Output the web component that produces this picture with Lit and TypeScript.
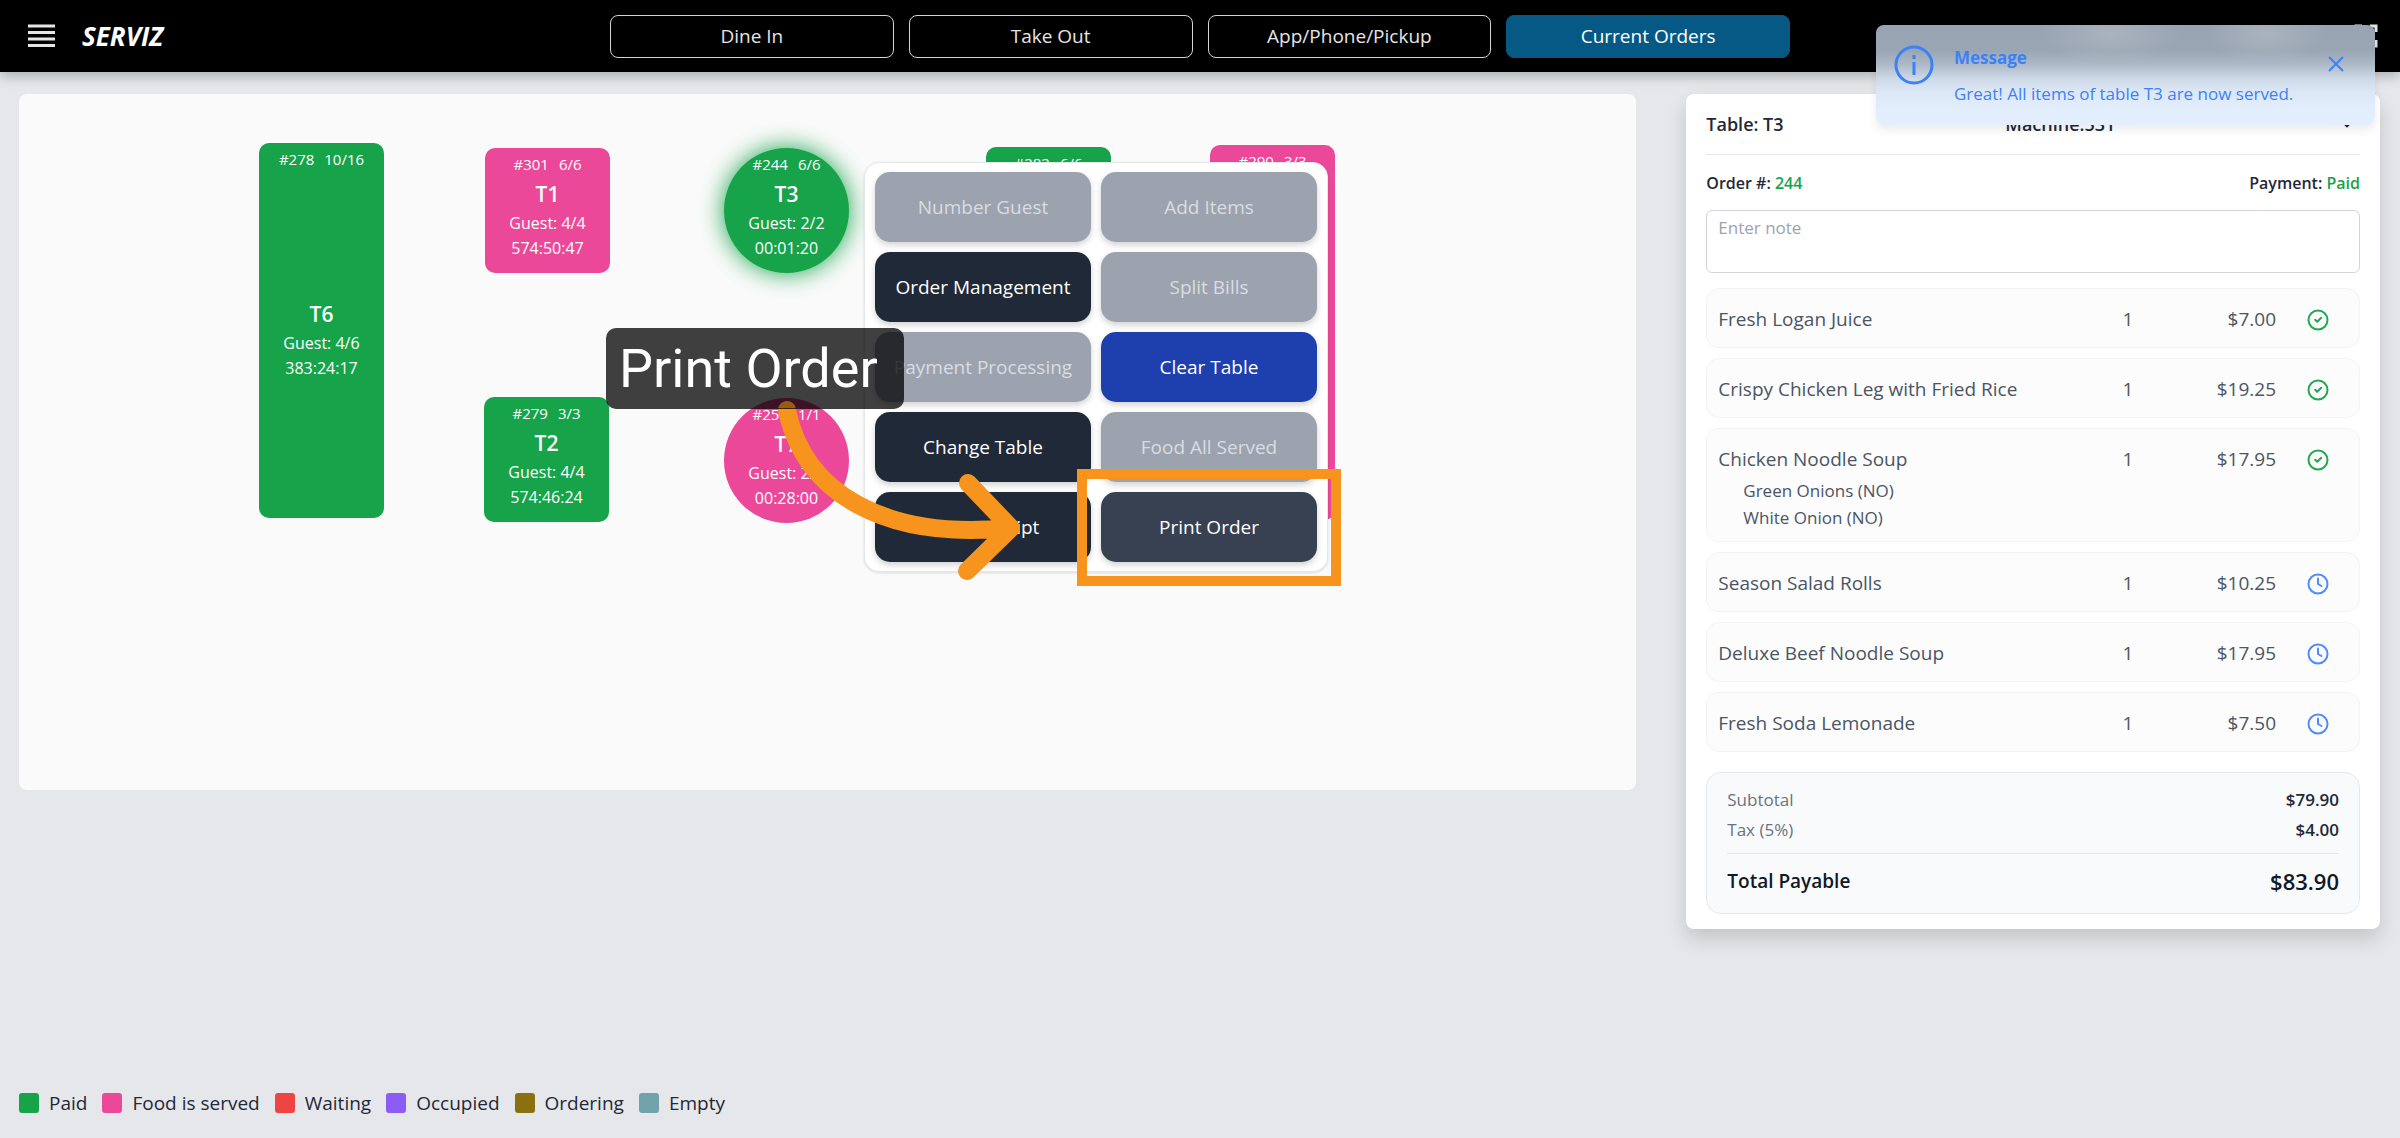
import { LitElement, html, css, svg, nothing } from "lit";
import { customElement } from "lit/decorators.js";
import { classMap } from "lit/directives/class-map.js";
import { styleMap } from "lit/directives/style-map.js";

type Status = "paid" | "served";
interface FloorTable { name: string; order: string; done: string; guests: string; time: string; status: Status; round?: boolean; active?: boolean; x: number; y: number; h: number; }
interface OrderItem { name: string; qty: number; price: string; served: boolean; notes?: string[]; }
interface Action { label: string; kind: "off" | "dark" | "blue" | "hover"; }

const NAV = ["Dine In", "Take Out", "App/Phone/Pickup", "Current Orders"];

const TABLES: FloorTable[] = [
  { name: "T6", order: "#278", done: "10/16", guests: "4/6", time: "383:24:17", status: "paid", x: 240, y: 49, h: 375 },
  { name: "T1", order: "#301", done: "6/6", guests: "4/4", time: "574:50:47", status: "served", x: 466, y: 54, h: 125 },
  { name: "T2", order: "#279", done: "3/3", guests: "4/4", time: "574:46:24", status: "paid", x: 465, y: 303, h: 125 },
  { name: "T3", order: "#244", done: "6/6", guests: "2/2", time: "00:01:20", status: "paid", round: true, active: true, x: 705, y: 54, h: 125 },
  { name: "T7", order: "#251", done: "1/1", guests: "2/2", time: "00:28:00", status: "served", round: true, x: 705, y: 304, h: 125 },
  { name: "T4", order: "#282", done: "6/6", guests: "4/4", time: "574:40:10", status: "paid", x: 967, y: 53, h: 125 },
  { name: "T5", order: "#290", done: "3/3", guests: "4/6", time: "383:20:05", status: "served", x: 1191, y: 51, h: 375 },
];

const ACTIONS: Action[] = [
  { label: "Number Guest", kind: "off" }, { label: "Add Items", kind: "off" },
  { label: "Order Management", kind: "dark" }, { label: "Split Bills", kind: "off" },
  { label: "Payment Processing", kind: "off" }, { label: "Clear Table", kind: "blue" },
  { label: "Change Table", kind: "dark" }, { label: "Food All Served", kind: "off" },
  { label: "Print Receipt", kind: "dark" }, { label: "Print Order", kind: "hover" },
];

const ITEMS: OrderItem[] = [
  { name: "Fresh Logan Juice", qty: 1, price: "$7.00", served: true },
  { name: "Crispy Chicken Leg with Fried Rice", qty: 1, price: "$19.25", served: true },
  { name: "Chicken Noodle Soup", qty: 1, price: "$17.95", served: true, notes: ["Green Onions (NO)", "White Onion (NO)"] },
  { name: "Season Salad Rolls", qty: 1, price: "$10.25", served: false },
  { name: "Deluxe Beef Noodle Soup", qty: 1, price: "$17.95", served: false },
  { name: "Fresh Soda Lemonade", qty: 1, price: "$7.50", served: false },
];

const LEGEND = [
  ["Paid", "paid"], ["Food is served", "served"], ["Waiting", "waiting"],
  ["Occupied", "occupied"], ["Ordering", "ordering"], ["Empty", "empty"],
];

const ARROW = "M21 20C38 104 120 150 243 138M202 93L245 138L201 181";

const statusIcon = (served: boolean) => html`
  <svg class="state ${served ? "ok" : "wait"}" viewBox="0 0 24 24" role="img" aria-label=${served ? "Served" : "Waiting"}>
    <circle cx="12" cy="12" r="9.5"></circle>
    ${served ? svg`<path d="m9.200 11.800 2 2 4-4"></path>` : svg`<path d="M12 6.500v5.500l3.500 2"></path>`}
  </svg>`;

@customElement("app-header")
class AppHeader extends LitElement {
  static styles = css`
    :host { display: block; }
    * { box-sizing: border-box; }
    .bar { display: grid; grid-template-columns: 1fr minmax(0, 1180px) 1fr; align-items: center; height: 72px; padding: 0 20px; background: #000; color: #fff; box-shadow: 0 4px 12px rgba(0, 0, 0, 0.25); }
    .brand { display: flex; align-items: center; gap: 26px; padding-left: 6px; }
    .icon { display: flex; padding: 0; border: 0; background: none; color: #e5e5e5; }
    .icon svg { width: 30px; height: 30px; fill: none; stroke: currentColor; stroke-width: 3; }
    .logo { margin: 0; font-size: 26px; line-height: 32px; font-weight: 700; font-style: italic; }
    nav { display: grid; grid-template-columns: repeat(4, 1fr); gap: 15px; }
    .tab { height: 43px; border: 1px solid #d4d4d4; border-radius: 8px; background: #000; color: #e5e5e5; font: inherit; font-size: 19px; }
    .tab.on { background: #075985; border-color: #075985; color: #fff; }
    .end { justify-self: end; }
  `;
  render() {
    return html`<header class="bar">
      <div class="brand">
        <button class="icon" aria-label="Menu"><svg viewBox="0 0 30 30"><path d="M2 5h27M2 11.500h27M2 18h27M2 24.500h27"></path></svg></button>
        <h1 class="logo">SERVIZ</h1>
      </div>
      <nav>${NAV.map((n, i) => html`<button class=${classMap({ tab: true, on: i === 3 })}>${n}</button>`)}</nav>
      <button class="icon end" aria-label="Full screen"><svg viewBox="0 0 30 30"><path d="M6 11V5h6M20 5h6v6M26 19v6h-6M12 25H6v-6"></path></svg></button>
    </header>`;
  }
}

@customElement("floor-plan")
class FloorPlan extends LitElement {
  static styles = css`
    :host { display: block; }
    * { box-sizing: border-box; }
    .floor { position: relative; height: 696px; border-radius: 8px; background: #fafafa; }
    .table { position: absolute; display: flex; flex-direction: column; align-items: center; justify-content: center; width: 125px; padding: 18px 0 0; border: 0; border-radius: 10px; color: #fff; font: inherit; }
    .paid { background: #16a34a; }
    .served { background: #ec4899; }
    .round { border-radius: 50%; }
    .active { box-shadow: 0 0 25px #16a34a; }
    .top { position: absolute; top: 5px; left: 0; right: 0; display: flex; justify-content: center; gap: 10px; font-size: 15px; line-height: 22px; }
    .name { font-size: 21px; line-height: 33px; font-weight: 600; }
    .line { font-size: 16px; line-height: 25px; }
    .menu { position: absolute; left: 845px; top: 68px; display: grid; grid-template-columns: 216px 216px; grid-auto-rows: 70px; gap: 10px; padding: 9px 10px; border: 1px solid #e5e7eb; border-radius: 15px; background: #fff; box-shadow: 0 1px 3px rgba(0, 0, 0, 0.12); }
    .act { padding: 0; border: 0; border-radius: 15px; color: #fff; font: inherit; font-size: 19px; box-shadow: 0 3px 6px rgba(0, 0, 0, 0.18); }
    .off { background: #9ca3af; color: #d9dce1; }
    .dark { background: #1f2937; }
    .blue { background: #1e40af; }
    .hover { background: #374151; }
    .frame { position: absolute; left: 1058px; top: 375px; width: 264px; height: 117px; border: 10px solid #f7941d; pointer-events: none; }
    .arrow { position: absolute; left: 747px; top: 296px; width: 270px; height: 200px; overflow: visible; fill: none; stroke: #f7941d; stroke-width: 18; stroke-linecap: round; stroke-linejoin: round; pointer-events: none; }
    .arrow.tail { height: 18px; overflow: hidden; opacity: 0.5; }
    .hint { position: absolute; left: 587px; top: 234px; padding: 0 26px 0 13px; border-radius: 10px; background: rgba(0, 0, 0, 0.75); color: #fff; font-family: Roboto, sans-serif; font-size: 54px; line-height: 81px; white-space: nowrap; }
  `;
  render() {
    return html`<section class="floor" aria-label="Floor plan">
      ${TABLES.map((t) => html`
        <button class=${classMap({ table: true, [t.status]: true, round: !!t.round, active: !!t.active })}
          style=${styleMap({ left: `${t.x}px`, top: `${t.y}px`, height: `${t.h}px` })}>
          <span class="top"><span>${t.order}</span><span>${t.done}</span></span>
          <span class="name">${t.name}</span>
          <span class="line">Guest: ${t.guests}</span>
          <span class="line">${t.time}</span>
        </button>`)}
      <div class="menu">
        ${ACTIONS.map((a) => html`<button class="act ${a.kind}" ?disabled=${a.kind === "off"}>${a.label}</button>`)}
      </div>
      <div class="frame"></div>
      <svg class="arrow" viewBox="0 0 270 200" aria-hidden="true"><path d=${ARROW}></path></svg>
      <div class="hint">Print Order</div>
      <svg class="arrow tail" viewBox="0 0 270 18" aria-hidden="true"><path d=${ARROW}></path></svg>
    </section>`;
  }
}

@customElement("order-panel")
class OrderPanel extends LitElement {
  static styles = css`
    :host { display: block; }
    * { box-sizing: border-box; }
    .panel { display: flex; flex-direction: column; padding: 0 20px 15px; border-radius: 8px; background: #fff; color: #1f2937; box-shadow: 0 10px 20px rgba(0, 0, 0, 0.15); }
    .head { display: grid; grid-template-columns: 299px 1fr 22px; align-items: center; height: 61px; border-bottom: 1px solid #e5e7eb; font-size: 18px; font-weight: 600; }
    .head svg { width: 18px; height: 18px; fill: none; stroke: currentColor; stroke-width: 2; }
    .meta { display: flex; justify-content: space-between; align-items: center; height: 55px; font-size: 16px; font-weight: 600; }
    .green { color: #16a34a; }
    .note { display: block; width: 100%; height: 63px; padding: 5px 11px; border: 1px solid #d1d5db; border-radius: 6px; background: #fff; color: inherit; font: inherit; font-size: 17px; line-height: 24px; resize: none; }
    .note::placeholder { color: #9ca3af; }
    .items { display: flex; flex-direction: column; gap: 10px; margin: 15px 0 20px; padding: 0; list-style: none; }
    .item { display: grid; grid-template-columns: 1fr 40px 128px 83px; align-items: center; padding: 16px 0 13px 11px; border: 1px solid #f3f4f6; border-radius: 13px; background: #fcfcfc; color: #4b5563; font-size: 19px; line-height: 29px; }
    .qty { text-align: center; }
    .price { text-align: right; }
    .state { justify-self: center; width: 24px; height: 24px; fill: none; stroke-width: 2; stroke-linecap: round; stroke-linejoin: round; }
    .ok { stroke: #22a94f; }
    .wait { stroke: #4f8bfb; }
    .mods { grid-column: 1 / -1; margin: 0 0 -3px; padding: 3px 0 0 25px; list-style: none; font-size: 17px; line-height: 27px; }
    .sum { display: flex; flex-direction: column; margin: 0; padding: 12px 20px 17px; border: 1px solid #e5e7eb; border-radius: 15px; background: #f9fafb; }
    .row { display: flex; justify-content: space-between; align-items: center; line-height: 30px; font-size: 17px; }
    .row dt { color: #6b7280; }
    .row dd { margin: 0; font-weight: 600; }
    .total { margin-top: 8px; padding-top: 12px; border-top: 1px solid #e5e7eb; font-size: 19px; font-weight: 600; }
    .row.total dt { color: #111827; }
    .total dd { font-size: 22px; color: #111827; }
  `;
  render() {
    return html`<aside class="panel">
      <div class="head"><span>Table: T3</span><span>Machine:531</span>
        <svg viewBox="0 0 16 16" aria-hidden="true"><path d="M4 6l4 4 4-4"></path></svg></div>
      <div class="meta"><span>Order #: <span class="green">244</span></span><span>Payment: <span class="green">Paid</span></span></div>
      <textarea class="note" aria-label="Note" placeholder="Enter note"></textarea>
      <ul class="items">${ITEMS.map((i) => html`
        <li class="item"><span>${i.name}</span><span class="qty">${i.qty}</span><span class="price">${i.price}</span>${statusIcon(i.served)}
          ${i.notes ? html`<ul class="mods">${i.notes.map((n) => html`<li>${n}</li>`)}</ul>` : nothing}
        </li>`)}</ul>
      <dl class="sum">
        <div class="row"><dt>Subtotal</dt><dd>$79.90</dd></div>
        <div class="row"><dt>Tax (5%)</dt><dd>$4.00</dd></div>
        <div class="row total"><dt>Total Payable</dt><dd>$83.90</dd></div>
      </dl>
    </aside>`;
  }
}

@customElement("app-root")
class AppRoot extends LitElement {
  static styles = css`
    :host { display: block; font-family: "Open Sans", "Noto Sans", sans-serif; }
    * { box-sizing: border-box; }
    .page { position: relative; display: flex; flex-direction: column; min-height: 100vh; background: #e5e7eb; }
    .main { flex: 1; display: grid; grid-template-columns: minmax(0, 1618fr) minmax(0, 694fr); gap: 50px; align-items: start; padding: 22px 20px 0 19px; }
    .legend { display: flex; gap: 15px; margin: 0; padding: 20px 19px; list-style: none; color: #1f2937; font-size: 19px; line-height: 30px; }
    .key { display: flex; align-items: center; gap: 10px; }
    .dot { width: 20px; height: 20px; border-radius: 3px; }
    .paid { background: #16a34a; }
    .served { background: #ec4899; }
    .waiting { background: #ef4444; }
    .occupied { background: #8b5cf6; }
    .ordering { background: #8a710f; }
    .empty { background: #71a3ac; }
    .toast {
      position: absolute; z-index: 2; top: 25px; right: 25px; display: flex; gap: 20px; width: 499px; height: 100px; padding: 20px 27px 0 18px; border-radius: 8px; color: #3b82f6; font-size: 17px;
      background:
        radial-gradient(70px 30px at 235px 8px, rgba(255, 255, 255, 0.16), transparent),
        radial-gradient(60px 30px at 390px 8px, rgba(255, 255, 255, 0.16), transparent),
        linear-gradient(#99a4b2 0, #9ba6b4 26px, #afbac9 40px, #cfdae9 54px, #dce7f6 66px, #e2eefd 84px, #e3effe);
      box-shadow: 0 5px 10px rgba(0, 0, 0, 0.08);
    }
    .info { width: 40px; height: 40px; fill: none; stroke: currentColor; stroke-width: 3; }
    .text { flex: 1; display: flex; flex-direction: column; gap: 11px; line-height: 25px; }
    .text p { margin: 0; }
    .close { display: flex; align-self: flex-start; margin-top: 7px; padding: 2px; border: 0; background: none; color: inherit; }
    .close svg { width: 20px; height: 20px; stroke: currentColor; stroke-width: 2; }
  `;
  render() {
    return html`<div class="page">
      <app-header></app-header>
      <main class="main"><floor-plan></floor-plan><order-panel></order-panel></main>
      <ul class="legend">${LEGEND.map(([l, c]) => html`<li class="key"><span class="dot ${c}"></span>${l}</li>`)}</ul>
      <div class="toast" role="status">
        <svg class="info" viewBox="0 0 40 40" aria-hidden="true"><circle cx="20" cy="20" r="18"></circle><path d="M20 17v13M20 10v4"></path></svg>
        <div class="text"><strong>Message</strong><p>Great! All items of table T3 are now served.</p></div>
        <button class="close" aria-label="Close"><svg viewBox="0 0 20 20"><path d="M3 3l14 14M17 3L3 17"></path></svg></button>
      </div>
    </div>`;
  }
}
